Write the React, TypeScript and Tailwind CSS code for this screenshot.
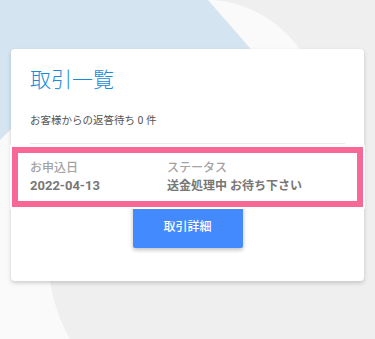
import React from 'react';

const font = { fontFamily: 'Roboto, "Noto Sans CJK JP", sans-serif' };

function Backdrop() {
  return (
    <svg className="absolute inset-0" width="375" height="339" viewBox="0 0 375 339">
      {/* light circle */}
      <path d="M0 0 L212 0 C248 2 280 22 299 48 L304 60 L50 282 C54 304 61 324 70 339 L0 339 Z" fill="#fafafa" />
      {/* blue tile */}
      <path d="M0 0 L208 0 L262 62 L12 128 L0 140 Z" fill="#d4e4f0" />
    </svg>
  );
}

export default function App() {
  return (
    <div className="relative w-full h-[339px] overflow-hidden bg-[#efefef]" style={font}>
      <Backdrop />

      <div className="relative px-[11px] pt-[49px]">
        <div className="bg-white rounded-[4px] shadow-[0_2px_4px_rgba(0,0,0,0.18)] pt-[17px] pb-[33px]">
          {/* Header */}
          <div className="px-[19px]">
            <h1 className="text-[21px] leading-[28px] font-light text-[#1a8ad8]">取引一覧</h1>
            <p className="mt-[19px] text-[10.5px] leading-[16px] text-[#555]">お客様からの返答待ち 0 件</p>
            <div className="mt-[14px] h-px bg-[#ebebeb]" />
          </div>

          {/* Highlighted row */}
          <div className="relative z-10 -mx-px mt-px bg-white p-[2px]">
            <div className="border-[6px] border-[#f76896] px-[12px] py-[6px]">
              <div className="flex">
                <div className="w-[137px]">
                  <div className="text-[12px] leading-[18px] font-medium text-[#a3a3a3]">お申込日</div>
                  <div className="text-[13px] leading-[18px] font-bold text-[#777]">2022-04-13</div>
                </div>
                <div>
                  <div className="text-[12px] leading-[18px] font-medium text-[#a3a3a3]">ステータス</div>
                  <div className="text-[12px] leading-[18px] font-bold text-[#777]">送金処理中 お待ち下さい</div>
                </div>
              </div>
            </div>
          </div>

          {/* Button */}
          <div className="flex justify-center">
            <button className="-mt-[8px] w-[110px] h-[47px] pt-[4px] rounded-[2px] bg-[#448aff] text-white text-[12px] font-medium shadow-[0_2px_4px_rgba(0,0,0,0.25)]">
              取引詳細
            </button>
          </div>
        </div>
      </div>
    </div>
  );
}
